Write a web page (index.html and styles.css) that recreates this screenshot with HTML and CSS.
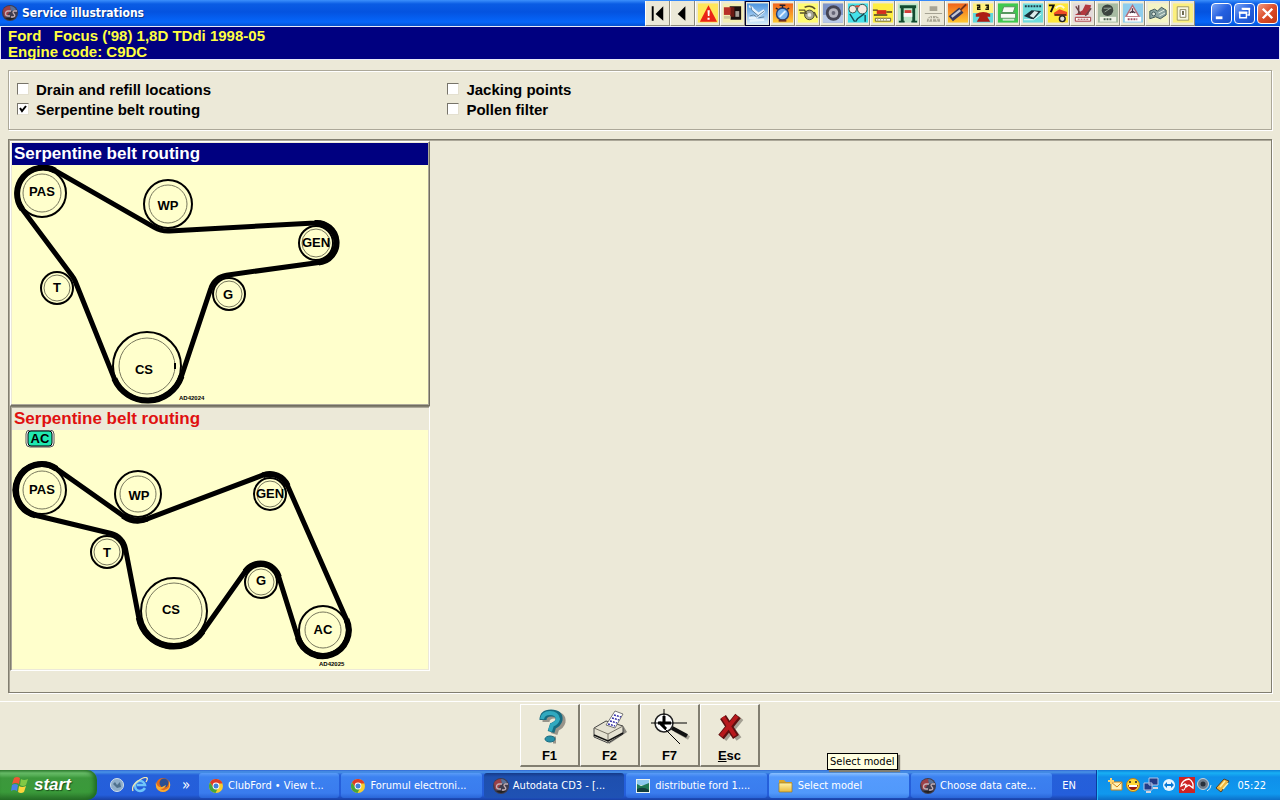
FILE: index.html
```
<!DOCTYPE html>
<html lang="en">
<head>
    <meta charset="UTF-8">
    <meta name="viewport" content="width=device-width, initial-scale=1.0">
    <title>Service illustrations</title>
    <link rel="stylesheet" href="styles.css">
</head>
<body>
    <!-- Shared icons -->
    <svg class="defs" width="0" height="0" aria-hidden="true">
        <defs>
            <linearGradient id="gold" x1="0" y1="0" x2="0" y2="1"><stop offset="0" stop-color="#fff3a8"/><stop offset="1" stop-color="#e8b93c"/></linearGradient>
            <linearGradient id="sky" x1="0" y1="0" x2="0" y2="1"><stop offset="0" stop-color="#4a94e0"/><stop offset="1" stop-color="#d8ecfa"/></linearGradient>
            <linearGradient id="fire" x1="0" y1="0" x2="0" y2="1"><stop offset="0" stop-color="#f0641c"/><stop offset="1" stop-color="#ffc832"/></linearGradient>
            <symbol id="app" viewBox="0 0 16 16">
                <circle cx="8" cy="8" r="8" fill="#403c4c"/>
                <path d="M1 5a8 8 0 0 1 7-4l1 4-5 7-2-1z" fill="#9c4048"/>
                <path d="M8 1a7 7 0 0 1 6 4l-5 1z" fill="#5b7196"/>
                <path d="M9 6H6a2 2 0 0 0 0 5h2M15 6h-3q-2 1 0 3t-1 3H9" fill="none" stroke="#c4b0b6" stroke-width="1.300"/>
                <path d="M3 13a8 8 0 0 0 10 0z" fill="#222"/>
            </symbol>
            <symbol id="chrome" viewBox="0 0 16 16">
                <circle cx="8" cy="8" r="7" fill="#f5cf30"/>
                <path d="M2 4.400a7 7 0 0 1 12.500 1H8L5 9z" fill="#dc3c28"/>
                <path d="M2 4.400a7 7 0 0 0 5.500 10.600L10 10 5 9z" fill="#45a63c"/>
                <circle cx="8" cy="8" r="3.400" fill="#fff"/>
                <circle cx="8" cy="8" r="2.500" fill="#3f7fd8"/>
            </symbol>
        </defs>
    </svg>

    <header class="titlebar">
        <svg class="icon16"><use href="#app"/></svg>
        <h1>Service illustrations</h1>
        <nav class="tools" aria-label="Modules">
            <button class="tool" aria-label="First"><svg viewBox="0 0 24 24"><path d="M6 5h2v15H6zM18 5v15l-8-7z"/></svg></button>
            <button class="tool" aria-label="Previous"><svg viewBox="0 0 24 24"><path d="M15 5v15l-8-7z"/></svg></button>
            <button class="tool" aria-label="Warnings"><svg viewBox="0 0 24 24"><path fill="#ffe75a" d="M2 2h21v20H2z"/><path fill="#ea2416" d="M13 4l9 17H4z"/><path fill="#fff" d="M12 9h2.400l-.4 6h-1.600zM12 17h2.200v2H12z"/></svg></button>
            <button class="tool" aria-label="Identification"><svg viewBox="0 0 24 24"><path fill="#f4eeb4" d="M2 2h21v20H2z"/><path d="M9 5h12v14H10z" fill="#1a1010"/><path fill="#b83028" d="M3 6h9v8H3z"/><path fill="#6a1a14" d="M10 6h4v10h-4z"/><path fill="#a8a098" d="M15 10h4v6h-4z"/><path d="M3 15h7v3H3z" fill="#cfc89c"/></svg></button>
            <button class="tool active" aria-label="Service illustrations"><svg viewBox="0 0 24 24"><path fill="url(#sky)" d="M1 1h22v22H1z"/><path d="M3 4q3 0 4 3l6 5 6-4M3 16h7l9-7M4 19l15-1" fill="none" stroke="#e6f2fc" stroke-width="2.500"/><path d="M5 3l1 5 7 6M4 14l4-1 3 2 8-6M13 16l6-1" fill="none" stroke="#5d7f9e"/></svg></button>
            <button class="tool" aria-label="Service times"><svg viewBox="0 0 24 24"><path fill="url(#fire)" d="M2 2h21v20H2z"/><circle cx="12" cy="13" r="7" fill="#203c78"/><circle cx="12" cy="13" r="5.500" fill="#78b4ee"/><path d="M9 16l6-6" stroke="#e4f2ff" stroke-width="2"/><path d="M9 4h6M5 7l2 1M19 7l-2 1M12 4v3" stroke="#252030" fill="none" stroke-width="1.500"/><path d="M8 20h8" stroke="#703024" stroke-width="2"/></svg></button>
            <button class="tool" aria-label="Timing belts"><svg viewBox="0 0 24 24"><path fill="#fffb72" d="M2 2h21v20H2z"/><circle cx="14" cy="14" r="5" fill="#a6a690" stroke="#44442c"/><circle cx="14" cy="14" r="2" fill="#eee"/><path d="M3 9h6l2 4M4 12h6M9 6q7-3 11 2M19 11l3 6" stroke="#57502b" fill="none" stroke-width="1.500"/></svg></button>
            <button class="tool" aria-label="Tyres"><svg viewBox="0 0 24 24"><path fill="#8096c8" d="M2 2h21v20H2z"/><path fill="#b8c9e8" d="M2 14h21v8H2z"/><circle cx="13" cy="12" r="8" fill="#454554"/><circle cx="13" cy="12" r="5" fill="#b4b4bf"/><circle cx="13" cy="12" r="2" fill="#666677"/></svg></button>
            <button class="tool" aria-label="Belts"><svg viewBox="0 0 24 24"><path fill="#45e1e9" d="M2 2h21v20H2z"/><g fill="#f5e8e0" stroke="#33514e"><circle cx="7" cy="8" r="4"/><circle cx="17" cy="8" r="5"/></g><path d="M4 13l5 8M19 13l-7 5-2 3M20 14v7" fill="none" stroke="#174c55" stroke-width="1.500"/><path fill="#e2452f" d="M10 4h4v2h-4z"/></svg></button>
            <button class="tool" aria-label="Fuel system"><svg viewBox="0 0 24 24"><path fill="#ffee42" d="M2 2h21v20H2z"/><path fill="#d52e1d" d="M6 9h10v4H6z"/><path d="M2 9h5M16 11h6M3 14h14" stroke="#4d3b1f" stroke-width="1.500"/><path fill="#fff" stroke="#666030" d="M4.500 17.500h16v3h-16z"/><path d="M7 17v3M10 17v3M13 17v3M16 17v3" stroke="#a8a060"/></svg></button>
            <button class="tool" aria-label="Lift points"><svg viewBox="0 0 24 24"><path fill="#bce6c8" d="M2 2h21v20H2z"/><path fill="#124b30" d="M4 4h17v3H4zM5 4h3v17H5zM17 4h3v17h-3zM3 20h6v2H3zM16 20h6v2h-6z"/><path fill="#d33c38" d="M9 9h7v4H9z"/><path fill="#f7f7f7" d="M8 12h9v4H8z"/></svg></button>
            <button class="tool" aria-label="Wheel alignment"><svg viewBox="0 0 24 24"><g fill="#a7a494"><path d="M9 5h8v5H9zM4 12h18v1H4z"/><path d="M6 21q0-6 7-6t7 6z"/></g><path d="M8 21l2-5M12 21v-6M17 21l-2-5M7 18h12" stroke="#ece9d8"/></svg></button>
            <button class="tool" aria-label="Spark plugs"><svg viewBox="0 0 24 24"><path fill="url(#fire)" d="M2 2h21v20H2z"/><path d="M5 18L16 9" stroke="#38385c" stroke-width="7"/><path d="M6 16L15 9" stroke="#c5c9d5" stroke-width="2.500"/><path d="M15 9l6-6" stroke="#6f331e" stroke-width="2"/></svg></button>
            <button class="tool" aria-label="Fault codes"><svg viewBox="0 0 24 24"><path fill="#fff07c" d="M2 2h21v10H2z"/><path fill="#61d9dc" d="M2 12h21v10H2z"/><path d="M6 4h3v2H7v2h3M15 4h3v4h-3M16 6h2" fill="none" stroke="#191909" stroke-width="1.500"/><path fill="#ac1d14" d="M5 13q8-4 15 0v3h-3l3 5H6l3-5H5z"/></svg></button>
            <button class="tool" aria-label="Engine management"><svg viewBox="0 0 24 24"><path fill="#40c94f" d="M2 2h21v20H2z"/><path fill="#f7faf3" stroke="#54915b" d="M8 5.500h12l-2 6H6zM4.500 12.500h16v5h-16z"/><path fill="#d5ead5" d="M7 18h12v2H7z"/></svg></button>
            <button class="tool" aria-label="Pin data"><svg viewBox="0 0 24 24"><path fill="#6fdcdc" d="M2 2h21v20H2z"/><path d="M4 5h17" stroke="#1f3c49" stroke-width="2" stroke-dasharray="2 1"/><path fill="#1c3038" d="M3 15l8-6 10 1-8 9z"/><path fill="#dcecec" d="M9 15l5-5 4 1-5 6z"/><path d="M3 19h10l8-6" stroke="#f5ffff" fill="none"/></svg></button>
            <button class="tool" aria-label="Key programming"><svg viewBox="0 0 24 24"><path fill="#ffe73a" d="M2 2h21v20H2z"/><path d="M3 4h5l-3 7" stroke="#111" fill="none" stroke-width="2"/><path fill="#ee4b25" d="M8 12l6-4 8 3v4H9z"/><path d="M10 7q5-5 9 0" stroke="#fffad2" stroke-width="2" fill="none"/><path d="M9 14h12" stroke="#402813" stroke-width="1.500"/><circle cx="17" cy="18" r="3" fill="#ddd" stroke="#222" stroke-width="1.500"/></svg></button>
            <button class="tool" aria-label="Airbags"><svg viewBox="0 0 24 24"><path fill="#e3dada" d="M2 2h21v20H2z"/><path fill="#b23a40" d="M4 14l8-5 3-6 6 1-3 10z"/><path d="M5 5l5 8M8 4v9M15 15l6-8" stroke="#6d4448" stroke-width="1.500"/><path fill="#fff" stroke="#a33439" d="M4.500 16.500h16v4h-16z"/><path d="M7 18.500h11" stroke="#a33439" stroke-dasharray="2 1"/></svg></button>
            <button class="tool" aria-label="Air conditioning"><svg viewBox="0 0 24 24"><path fill="#a7bca2" d="M2 2h21v20H2z"/><circle cx="12" cy="9" r="6" fill="#3c4540"/><path d="M8 7h8M9 11l6-4" stroke="#98a79b"/><path fill="#eef3e6" d="M4 16h17v5H4z"/><path d="M8 18.500h9" stroke="#4b6250" stroke-width="2" stroke-dasharray="2 1"/></svg></button>
            <button class="tool" aria-label="ABS"><svg viewBox="0 0 24 24"><path fill="#8ecdec" d="M2 2h21v20H2z"/><path fill="#fff" stroke="#b66d79" stroke-width="1.500" d="M12 4l7 12H5z"/><path d="M12 7v5M9 12l3-2 3 2" stroke="#4b3544" fill="none" stroke-width="1.500"/><path fill="#fff" d="M4 16h17v5H4z"/><path d="M7 18.500h10" stroke="#a04d5d" stroke-width="2" stroke-dasharray="2 1"/></svg></button>
            <button class="tool" aria-label="Engine"><svg viewBox="0 0 24 24"><path fill="#f4f4c5" d="M2 2h21v20H2z"/><path fill="#8aa4a2" stroke="#395358" d="M4 10l5-2 3 2 4-4 5 3v5l-6 4-5-2-6 2z"/><circle cx="8" cy="13" r="2" fill="#dfe8dc" stroke="#395358"/><path d="M13 12l6-3M14 15l6-3" stroke="#e3eee4"/></svg></button>
            <button class="tool" aria-label="Electrical"><svg viewBox="0 0 24 24"><path fill="#fbef7e" d="M2 2h21v20H2z"/><path fill="#f6f6dd" stroke="#a09b62" d="M6.500 5.500h12v14h-12z"/><path fill="#fff" stroke="#85815c" d="M9.500 8.500h6v8h-6z"/><path d="M12.500 10v4" stroke="#69664b" stroke-width="2"/></svg></button>
        </nav>
        <div class="window-buttons">
            <button class="win" aria-label="Minimize"><svg viewBox="0 0 20 20"><path fill="#fff" d="M4 13h7v3H4z"/></svg></button>
            <button class="win" aria-label="Restore"><svg viewBox="0 0 20 20"><path d="M8 5.500h7v6h-2M5 9.500h7v5H5z" fill="none" stroke="#fff" stroke-width="1.500"/><path d="M7 5h9M4 9h9" stroke="#fff" stroke-width="2"/></svg></button>
            <button class="win close" aria-label="Close"><svg viewBox="0 0 20 20"><path d="M5 5l10 10M15 5L5 15" stroke="#fff" stroke-width="2.500"/></svg></button>
        </div>
    </header>

    <div class="vehicle">
        <p>Ford   Focus ('98) 1,8D TDdi 1998-05</p>
        <p>Engine code: C9DC</p>
    </div>

    <form class="options">
        <label><input type="checkbox"> Drain and refill locations</label>
        <label><input type="checkbox"> Jacking points</label>
        <label><input type="checkbox" checked> Serpentine belt routing</label>
        <label><input type="checkbox"> Pollen filter</label>
    </form>

    <main class="illustrations">
        <section class="card selected">
            <h2>Serpentine belt routing</h2>
            <svg class="diagram" viewBox="12 165 416 239">
                <g class="pulley">
                    <circle cx="42" cy="193" r="24"/><circle cx="168" cy="204" r="24"/><circle cx="316" cy="243" r="17"/>
                    <circle cx="57" cy="288" r="16"/><circle cx="229" cy="294" r="16"/><circle cx="147" cy="366" r="34"/>
                </g>
                <g class="rim">
                    <circle cx="42" cy="193" r="19"/><circle cx="168" cy="204" r="19"/><circle cx="316" cy="243" r="14"/>
                    <circle cx="57" cy="288" r="13"/><circle cx="229" cy="294" r="13"/><circle cx="147" cy="366" r="28"/>
                </g>
                <path class="belt" d="M55.200 170.600L154.300 227.300A27 27 0 0 0 169.600 231L314.800 223A19.500 19.500 0 0 1 318.700 262.400L226.400 275.200A19 19 0 0 0 210.800 288.500L181.500 376.300A36 36 0 0 1 114.300 378.600L75.200 281.200A19 19 0 0 0 72.200 276L22.300 209.200A26 26 0 0 1 55.200 170.600z"/>
                <path class="wrap" d="M314.800 223A19.500 19.500 0 0 1 318.700 262.400M181.500 376.300A36 36 0 0 1 114.300 378.600M22.300 209.200A26 26 0 0 1 55.200 170.600"/>
                <path class="mark" d="M175 363v6"/>
                <g class="name">
                    <text x="42" y="196">PAS</text><text x="168" y="210">WP</text><text x="316" y="247">GEN</text>
                    <text x="57" y="292">T</text><text x="228" y="299">G</text><text x="144" y="374">CS</text>
                </g>
                <text class="ref" x="179" y="400">AD42024</text>
            </svg>
        </section>
        <section class="card">
            <h2>Serpentine belt routing</h2>
            <svg class="diagram" viewBox="12 430 416 239">
                <rect class="tag-edge" x="26" y="430" width="28" height="17" rx="4"/>
                <rect class="tag" x="28" y="431" width="24" height="15" rx="3"/>
                <g class="pulley">
                    <circle cx="42" cy="490" r="24"/><circle cx="138" cy="494" r="23"/><circle cx="270" cy="494" r="16"/>
                    <circle cx="107" cy="552" r="16"/><circle cx="261" cy="582" r="16"/><circle cx="174" cy="611" r="33"/><circle cx="323" cy="630" r="24"/>
                </g>
                <g class="rim">
                    <circle cx="42" cy="490" r="19"/><circle cx="138" cy="494" r="18"/><circle cx="270" cy="494" r="13"/>
                    <circle cx="107" cy="552" r="13"/><circle cx="261" cy="582" r="13"/><circle cx="174" cy="611" r="28"/><circle cx="323" cy="630" r="18"/>
                </g>
                <path class="belt" d="M56.500 468.800L123 515.700A26 26 0 0 0 147.200 518.800L262.800 475.200A19.500 19.500 0 0 1 287.600 485.700L346.500 619.500A26 26 0 1 1 297.900 637.700L278.800 576.900A19 19 0 0 0 245.200 571.500L202.700 631.500A35.500 35.500 0 0 1 138.800 617.800L125.400 548.400A19 19 0 0 0 111.200 533.500L35.400 515.300A26 26 0 1 1 56.500 468.800z"/>
                <path class="wrap" d="M123 515.700A26 26 0 0 0 147.200 518.800M262.800 475.200A19.500 19.500 0 0 1 287.600 485.700M346.500 619.500A26 26 0 1 1 297.900 637.700M278.800 576.900A19 19 0 0 0 245.200 571.500M202.700 631.500A35.500 35.500 0 0 1 138.800 617.800M35.400 515.300A26 26 0 1 1 56.500 468.800"/>
                <g class="name">
                    <text x="40" y="443">AC</text><text x="42" y="494">PAS</text><text x="139" y="500">WP</text><text x="270" y="498">GEN</text>
                    <text x="107" y="557">T</text><text x="261" y="585">G</text><text x="171" y="614">CS</text><text x="323" y="634">AC</text>
                </g>
                <text class="ref" x="319" y="666">AD42025</text>
            </svg>
        </section>
    </main>

    <footer class="actions">
        <button class="action">
            <svg viewBox="0 0 40 36"><path d="M16 14q0-7 8-7 9 0 8 7-1 4-6 6l-2 6M23 32h3" fill="none" stroke="#98948a" stroke-width="7"/><path d="M13 12q0-7 8-7 9 0 8 7-1 4-6 6l-2 6" fill="none" stroke="#176b80" stroke-width="7"/><path d="M12 11q1-6 8-6t8 6q-1 4-6 6l-2 6" fill="none" stroke="#31a9bf" stroke-width="4"/><ellipse cx="20" cy="31" rx="5" ry="3" fill="#258fa7" stroke="#176b80"/></svg>
            <span>F1</span>
        </button>
        <button class="action">
            <svg viewBox="0 0 40 36"><path d="M19 36l18-12-3-5-15 9z" fill="#8b8980"/><path d="M4 20l12-7 17 5v8l-15 9L4 29z" fill="#e5e2d2" stroke="#444"/><path d="M4 20l14 6 15-8M18 26v8" fill="none" stroke="#777366"/><path d="M4 27l14 6 15-8" fill="none" stroke="#111" stroke-width="1.500"/><path d="M16 17l9-14 8 3-8 14z" fill="#fff" stroke="#777"/><path d="M24 7l7 2M22 10l7 2M20 13l7 2M18 16l7 2" stroke="#3430a8" stroke-width="1.500" stroke-dasharray="2 1"/></svg>
            <span>F2</span>
        </button>
        <button class="action">
            <svg viewBox="0 0 40 36"><path d="M25 22l14 8" stroke="#aaa698" stroke-width="4"/><circle cx="14" cy="15" r="9" fill="#fff" stroke="#222" stroke-width="1.500"/><path d="M14 1v18M1 15h36M14 20l16 16" stroke="#000"/><path d="M8 15h13M14 8v7M9 14l7 7" stroke="#000" stroke-width="3"/><path d="M22 20l15 8" stroke="#111" stroke-width="4"/></svg>
            <span>F7</span>
        </button>
        <button class="action">
            <svg viewBox="0 0 40 36"><path d="M15 12l14 19M31 10L14 31" stroke="#a4a093" stroke-width="6"/><path d="M13 9l13 20M28 8L11 29" stroke="#5e1010" stroke-width="7"/><path d="M13 9l12 19M27 8L11 28" stroke="#b8181c" stroke-width="4"/></svg>
            <span><u>E</u>sc</span>
        </button>
        <div class="tooltip" role="tooltip">Select model</div>
    </footer>

    <nav class="taskbar" aria-label="Taskbar">
        <button class="start">
            <svg viewBox="0 0 20 20"><path fill="#ee5535" d="M4 3q3-2 6 0L9 9q-3-2-7 0z"/><path fill="#82c945" d="M11 4q3 2 7 0l-2 6q-3 2-6 0z"/><path fill="#4a82e8" d="M2 10q3-2 6 0l-1 6q-3-2-6 0z"/><path fill="#fdd53c" d="M9 11q3 2 7 0l-2 6q-3 2-6 0z"/></svg>
            start
        </button>
        <div class="quick">
            <button aria-label="Messenger"><svg class="icon16" viewBox="0 0 16 16"><circle cx="8" cy="8" r="6.500" fill="#8faec9" stroke="#d3e1ec"/><path d="M4 7l2-2 2 3 3-3 1 5-4 1z" fill="#4f718d"/></svg></button>
            <button aria-label="Internet Explorer"><svg class="icon16" viewBox="0 0 16 16"><path d="M13 11q-2 3-5 3a5 5 0 1 1 5-6H5" fill="none" stroke="#6fc5fa" stroke-width="2.500"/><path d="M1 14Q-1 9 6 4t9-3q1 1-1 4" fill="none" stroke="#f4e8b0" stroke-width="1.300"/></svg></button>
            <button aria-label="Firefox"><svg class="icon16" viewBox="0 0 16 16"><circle cx="8" cy="8" r="7" fill="#e46a1a"/><circle cx="9" cy="6" r="4.500" fill="#2b4f91"/><path d="M1 5q1 6 6 5l4-2q-1 4-6 4 5 3 9-2v-6q3 5-1 9-5 4-10 0-3-3-2-8z" fill="#fbae32"/></svg></button>
            <button class="more" aria-label="More">»</button>
        </div>
        <div class="tasks">
            <button class="task"><svg class="icon16"><use href="#chrome"/></svg><span>ClubFord • View t...</span></button>
            <button class="task"><svg class="icon16"><use href="#chrome"/></svg><span>Forumul electroni...</span></button>
            <button class="task pressed"><svg class="icon16"><use href="#app"/></svg><span>Autodata CD3 - [...</span></button>
            <button class="task"><svg class="icon16" viewBox="0 0 16 16"><path d="M1 1h14v14H1z" fill="#e9f4ef"/><path d="M2 2h12v5H2z" fill="#8cc8ef"/><path d="M2 6l4 2 3-1 5-2v9H2z" fill="#1d7854"/><path d="M2 11q6-3 12 1v2H2z" fill="#123e3c"/></svg><span>distributie ford 1....</span></button>
            <button class="task flash"><svg class="icon16" viewBox="0 0 16 16"><path d="M1 2h5l2 2h6v10H1z" fill="#d9a62b"/><path d="M1 5h13v9H1z" fill="url(#gold)" stroke="#997826" stroke-width=".7"/></svg><span>Select model</span></button>
            <button class="task"><svg class="icon16"><use href="#app"/></svg><span>Choose data cate...</span></button>
        </div>
        <button class="lang">EN</button>
        <div class="tray">
            <svg class="icon16" viewBox="0 0 16 16"><path d="M4 5h11v8H4z" fill="#fff0b5" stroke="#d28519"/><path d="M4 5l6 5 5-5" fill="none" stroke="#d28519"/><path d="M1 4h6M4 1v6" stroke="#ffd36b" stroke-width="2"/></svg>
            <svg class="icon16" viewBox="0 0 16 16"><circle cx="8" cy="8" r="6.500" fill="#ffd735" stroke="#b77d16"/><path d="M3 8h10q-1 5-5 5T3 8z" fill="#9b1910"/><path d="M4 8h8v2H4z" fill="#fff"/><path d="M5 4v2M11 4v2" stroke="#222" stroke-width="1.500"/></svg>
            <svg class="icon16" viewBox="0 0 16 16"><path d="M6 1h9v7H6zM1 6h8v7H1z" fill="#233b86" stroke="#b5c5e5"/><path d="M3 15h5M10 11h5" stroke="#d4d4dd" stroke-width="2"/></svg>
            <svg class="icon16" viewBox="0 0 16 16"><circle cx="8" cy="8" r="6" fill="#e6f5ff"/><path d="M3 8l3-3v2h4V5l3 3-3 3V9H6v2z" fill="#0878d4"/></svg>
            <svg class="icon16" viewBox="0 0 16 16"><path d="M0 0h16v16H0z" fill="#ce2424"/><path d="M2 9Q3 3 10 2q5 3 4 9l-4-3-3 2-1-3z" fill="none" stroke="#fff" stroke-width="1.300"/><path d="M8 7l-3 6q-2 1-2-1" stroke="#fff" fill="none"/></svg>
            <svg class="icon16" viewBox="0 0 16 16"><circle cx="6" cy="7" r="5.500" fill="#717d8a" stroke="#c8d4dc"/><circle cx="6" cy="7" r="2.500" fill="#28313b"/><path d="M10 14q4-2 4-6" stroke="#d9edf8" fill="none"/></svg>
            <svg class="icon16" viewBox="0 0 16 16"><path d="M1 11l8-9 5 2-8 11z" fill="#f1b53d" stroke="#50402a"/><path d="M5 10l5-6M8 12l5-6" stroke="#fff1a8" stroke-width="1.500"/></svg>
            <time>05:22</time>
        </div>
    </nav>
</body>
</html>
```
FILE: styles.css
```
* {
    box-sizing: border-box;
}
body {
    margin: 0;
    min-height: 100vh;
    display: flex;
    flex-direction: column;
    background-color: #ece9d8;
    font-family: "Liberation Sans", Arial, sans-serif;
    font-size: 15px;
    font-weight: bold;
    color: #000;
}
h1, h2, p {
    margin: 0;
}
button {
    font: inherit;
    color: inherit;
    padding: 0;
    border: none;
    background: none;
}
svg {
    display: block;
}
.defs {
    position: absolute;
}
.icon16 {
    width: 16px;
    height: 16px;
    flex: none;
}

/* Title bar */
.titlebar {
    display: flex;
    align-items: center;
    height: 26px;
    padding: 0 2px;
    background: linear-gradient(#3c90fc 0, #0a5ce4 4px, #0453e0 12px, #0566fb 22px, #0450d0 26px);
}
.titlebar h1 {
    flex: 1;
    margin-left: 4px;
    font-family: "DejaVu Sans Condensed", "DejaVu Sans", sans-serif;
    font-size: 12px;
    color: #fff;
    text-shadow: 1px 1px #0a3a90;
}
.tools {
    display: flex;
}
.tool {
    width: 25px;
    height: 25px;
    background-color: #ece9d8;
    border-left: 1px solid #fff;
    border-right: 1px solid #8d8a7c;
    border-bottom: 1px solid #8d8a7c;
}
.tool svg {
    width: 23px;
    height: 24px;
}
.tool.active {
    border: 1px solid #000030;
}
.window-buttons {
    display: flex;
    gap: 2px;
    margin-left: 16px;
}
.win {
    width: 21px;
    height: 21px;
    border: 1px solid #fff;
    border-radius: 4px;
    background: linear-gradient(135deg, #7ba5f5, #2560e0 50%, #1a50c8);
}
.win svg {
    width: 19px;
    height: 19px;
}
.win.close {
    background: linear-gradient(135deg, #f09a80, #dc4c28 50%, #c03814);
}

/* Vehicle details */
.vehicle {
    height: 34px;
    padding: 1px 7px;
    border: 1px solid #e8eaf8;
    background-color: #000080;
    color: #ffff40;
    line-height: 16px;
}
.vehicle p {
    white-space: pre;
}

/* Illustration choice */
.options {
    display: grid;
    grid-template-columns: 19fr 36fr;
    align-content: start;
    margin: 10px 8px 9px;
    padding: 8px;
    height: 60px;
    border: 1px solid #aca899;
    box-shadow: inset 1px 1px #fff, 1px 1px #fff;
}
.options label {
    display: flex;
    align-items: center;
    height: 20px;
    gap: 7px;
}
.options input {
    appearance: none;
    width: 12px;
    height: 12px;
    margin: 0;
    background-color: #fff;
    border: 1px solid #e4e0d0;
    border-top-color: #77746a;
    border-left-color: #77746a;
}
.options input:checked {
    background-image: url("data:image/svg+xml,%3Csvg xmlns='http://www.w3.org/2000/svg' viewBox='0 0 10 10'%3E%3Cpath d='M2 4l2 3 4-5' fill='none' stroke='black' stroke-width='2'/%3E%3C/svg%3E");
}

/* Diagrams */
.illustrations {
    flex: 1;
    display: grid;
    grid-template-columns: repeat(3, 1fr);
    align-content: start;
    margin: 0 8px 8px;
    padding: 1px;
    border: 1px solid #817e70;
    box-shadow: inset 1px 1px #aca899, 1px 1px #fff;
}
.card {
    grid-column: 1;
    border: 1px solid #fff;
    border-top-color: #817e70;
    border-left-color: #817e70;
    box-shadow: inset 1px 1px #aca899;
    padding: 1px;
}
.card.selected {
    border-color: #fff #716e60 #716e60 #fff;
    box-shadow: inset -1px -1px #aca899;
}
.card h2 {
    height: 22px;
    padding-left: 2px;
    font-size: 17px;
    line-height: 21px;
    color: #e01010;
}
.card.selected h2 {
    background-color: #000080;
    color: #fff;
}
.diagram {
    width: 100%;
    background-color: #ffffcc;
}
.pulley {
    fill: none;
    stroke: #000;
    stroke-width: 2;
}
.rim {
    fill: none;
    stroke: #77775c;
    stroke-width: 1;
}
.belt {
    fill: none;
    stroke: #000;
    stroke-width: 5;
}
.wrap {
    fill: none;
    stroke: #000;
    stroke-width: 6;
}
.mark {
    stroke: #000;
    stroke-width: 2;
}
.name {
    font-size: 13px;
    text-anchor: middle;
}
.ref {
    font-size: 6px;
}
.tag {
    fill: #20e8b0;
    stroke: #000;
}
.tag-edge {
    fill: #fff;
    stroke: #555;
}

/* Function keys */
.actions {
    position: relative;
    display: flex;
    justify-content: center;
    height: 69px;
    padding-top: 2px;
    border-top: 1px solid #fff;
}
.action {
    display: flex;
    flex-direction: column;
    align-items: center;
    width: 60px;
    height: 63px;
    padding-top: 3px;
    border: 1px solid #fff;
    border-right: 2px solid #817e70;
    border-bottom: 2px solid #817e70;
    font-size: 13px;
    line-height: 14px;
}
.action svg {
    width: 40px;
    height: 36px;
    margin-bottom: 5px;
}
.tooltip {
    position: absolute;
    left: 827px;
    bottom: 0;
    padding: 0 2px;
    border: 1px solid #000;
    background-color: #ffffe1;
    box-shadow: 2px 2px 1px #807d70;
    font-family: "DejaVu Sans Condensed", "DejaVu Sans", sans-serif;
    font-size: 11px;
    font-weight: normal;
    line-height: 15px;
}

/* Taskbar */
.taskbar {
    display: flex;
    height: 30px;
    background: linear-gradient(#3168d5 0, #4993e6 2px, #2560da 5px, #245edb 25px, #1941a5 30px);
    color: #fff;
    font-family: "DejaVu Sans Condensed", "DejaVu Sans", sans-serif;
    font-size: 11px;
    font-weight: normal;
}
.start {
    display: flex;
    align-items: center;
    gap: 4px;
    width: 97px;
    padding-left: 10px;
    border-radius: 0 10px 10px 0;
    background: linear-gradient(#3c8a3c 0, #6cc06c 3px, #3c983c 8px, #3a9a3a 22px, #286e28 30px);
    box-shadow: inset -3px 0 4px #1f6b22;
    font-family: "Liberation Sans", Arial, sans-serif;
    font-size: 17px;
    font-weight: bold;
    font-style: italic;
    text-shadow: 1px 1px 1px #1a501a;
}
.start svg {
    width: 20px;
    height: 20px;
}
.quick {
    display: flex;
    align-items: center;
    gap: 7px;
    width: 102px;
    padding-left: 12px;
}
.more {
    height: 28px;
    margin-left: 4px;
    font-size: 15px;
    line-height: 12px;
}
.tasks {
    flex: 1;
    display: flex;
    gap: 2px;
    padding: 3px 0 2px;
    min-width: 0;
}
.task {
    flex: 1;
    display: flex;
    align-items: center;
    gap: 4px;
    min-width: 0;
    padding-left: 9px;
    border-radius: 3px;
    background: linear-gradient(#5a9cf8, #3c81f0 4px, #3a7cee 20px, #2a66d8);
    white-space: nowrap;
}
.task.pressed {
    background: linear-gradient(#153a88, #1e4fae 4px, #1f52b4);
}
.task.flash {
    background: linear-gradient(#8ac0ff, #559bfd 4px, #5199fb 20px, #3c80e8);
}
.lang {
    width: 45px;
    padding-right: 10px;
}
.tray {
    display: flex;
    align-items: center;
    gap: 2px;
    padding: 0 14px 0 10px;
    border-left: 1px solid #0a3c9c;
    box-shadow: inset 1px 0 #22b8f8;
    background: linear-gradient(#0c80d8 0, #18b0f4 3px, #0f90ea 7px, #1098ee 24px, #0c70c8 30px);
}
.tray time {
    margin-left: 4px;
}
```
